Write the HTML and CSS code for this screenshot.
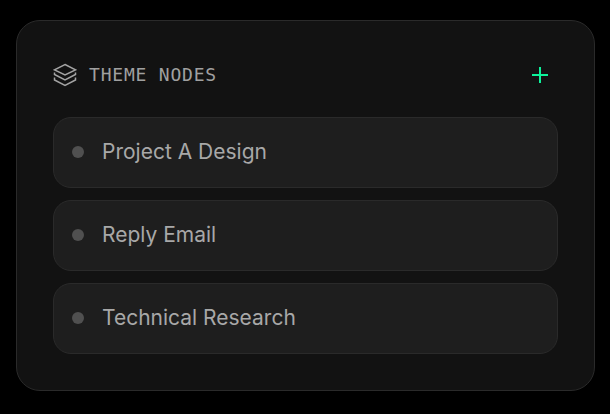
FILE: index.html
```html
<!DOCTYPE html>
<html>
<head>
  <title>Theme Nodes</title>
  <link rel="stylesheet" href="styles.css">
</head>
<body>
  <div class="panel">
    <div class="panel-head">
      <div class="panel-title">
        <svg class="layers-icon" viewBox="0 0 24 24" width="24" height="24" fill="none" stroke="currentColor" stroke-width="1.5">
          <path d="M12 1.5 L22.5 6.8 L12 12 L1.5 6.8 Z"/>
          <path d="M1.5 9.5 V11.5 L12 17 L22.5 11.5 V9.5"/>
          <path d="M1.5 14.5 V17 L12 22.5 L22.5 17 V14.5"/>
        </svg>
        <span class="title-text">THEME NODES</span>
      </div>
      <svg class="add-icon" viewBox="0 0 16 16" width="16" height="16" fill="none" stroke="currentColor" stroke-width="2">
        <path d="M8 0 V16 M0 8 H16"/>
      </svg>
    </div>
    <div class="node-list">
      <div class="node"><span class="dot"></span><span class="node-name">Project A Design</span></div>
      <div class="node"><span class="dot"></span><span class="node-name">Reply Email</span></div>
      <div class="node"><span class="dot"></span><span class="node-name">Technical Research</span></div>
    </div>
  </div>
</body>
</html>
```

FILE: styles.css
```css
* {
  box-sizing: border-box;
}
body {
  margin: 0;
  background-color: #000;
  font-family: Inter, sans-serif;
}
.panel {
  width: 579px;
  height: 371px;
  margin: 20px 0 0 16px;
  padding: 36px;
  background-color: #121212;
  border: 1px solid #2a2a2a;
  border-radius: 24px;
}
.panel-head {
  display: flex;
  justify-content: space-between;
  align-items: center;
  height: 36px;
  padding-right: 10px;
  margin-bottom: 24px;
}
.panel-title {
  display: flex;
  align-items: center;
  gap: 12px;
  color: #a0a0a0;
  font-family: "DejaVu Sans Mono", monospace;
  font-size: 18px;
  letter-spacing: 0.8px;
}
.title-text {
  margin-bottom: 2px;
}
.layers-icon {
  color: #a3a3a3;
}
.add-icon {
  color: #0df29a;
}
.node-list {
  display: flex;
  flex-direction: column;
  gap: 12px;
}
.node {
  display: flex;
  align-items: center;
  gap: 18px;
  height: 71px;
  padding: 0 18px 1px;
  background-color: #1e1e1e;
  border: 1px solid #2a2a2a;
  border-radius: 18px;
  color: #a8a8a8;
  font-size: 21px;
}
.node-name {
  margin-bottom: 2px;
}
.dot {
  width: 12px;
  height: 12px;
  border-radius: 50%;
  background-color: #505050;
}
```
